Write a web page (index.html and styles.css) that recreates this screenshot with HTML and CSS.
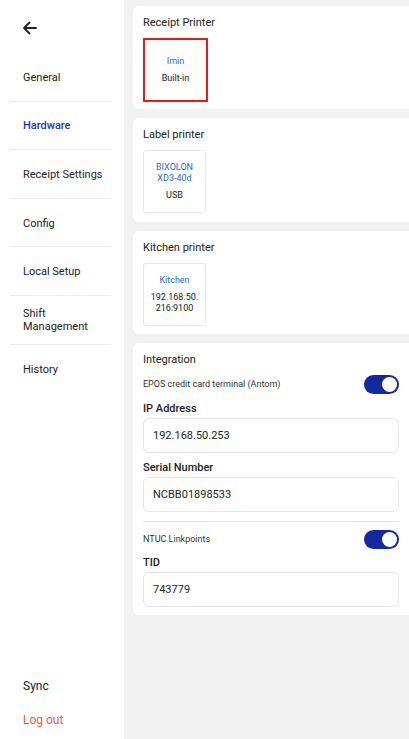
FILE: index.html
```html
<!DOCTYPE html>
<html>
<head>
<meta charset="utf-8">
<link rel="stylesheet" href="styles.css">
</head>
<body>
<div class="app">
  <aside class="sidebar">
    <div class="back">
      <svg width="15" height="14" viewBox="0 0 15 14"><path d="M14 7H2M7.5 1.5L2 7l5.5 5.5" fill="none" stroke="#222" stroke-width="1.8" stroke-linecap="round" stroke-linejoin="round"/></svg>
    </div>
    <nav class="menu">
      <div class="item">General</div>
      <div class="item active">Hardware</div>
      <div class="item">Receipt Settings</div>
      <div class="item">Config</div>
      <div class="item">Local Setup</div>
      <div class="item">Shift<br>Management</div>
      <div class="item last">History</div>
    </nav>
    <div class="bottom">
      <div class="sync">Sync</div>
      <div class="logout">Log out</div>
    </div>
  </aside>
  <main class="main">
    <section class="card first">
      <div class="card-title">Receipt Printer</div>
      <div class="printer selected">
        <div class="pname">Imin</div>
        <div class="pdetail">Built-in</div>
      </div>
    </section>
    <section class="card">
      <div class="card-title">Label printer</div>
      <div class="printer">
        <div class="pname">BIXOLON<br>XD3-40d</div>
        <div class="pdetail">USB</div>
      </div>
    </section>
    <section class="card third">
      <div class="card-title">Kitchen printer</div>
      <div class="printer">
        <div class="pname">Kitchen</div>
        <div class="pdetail">192.168.50.<br>216:9100</div>
      </div>
    </section>
    <section class="card integ">
      <div class="card-title">Integration</div>
      <div class="toggle-row">
        <span class="toggle-label">EPOS credit card terminal (Antom)</span>
        <span class="toggle"><span class="knob"></span></span>
      </div>
      <div class="field-label">IP Address</div>
      <div class="input">192.168.50.253</div>
      <div class="field-label">Serial Number</div>
      <div class="input">NCBB01898533</div>
      <div class="divider"></div>
      <div class="toggle-row second">
        <span class="toggle-label">NTUC Linkpoints</span>
        <span class="toggle"><span class="knob"></span></span>
      </div>
      <div class="field-label tid">TID</div>
      <div class="input">743779</div>
    </section>
  </main>
</div>
</body>
</html>
```
FILE: styles.css
```css
* { box-sizing: border-box; }
html, body { margin: 0; padding: 0; }
body {
  font-family: Roboto, "Liberation Sans", sans-serif;
  color: #222;
  width: 409px;
  height: 739px;
  overflow: hidden;
}
.app {
  display: flex;
  height: 739px;
}
.sidebar {
  width: 124px;
  flex: none;
  background: #fff;
  display: flex;
  flex-direction: column;
}
.back {
  height: 53px;
  padding: 21px 0 0 22px;
}
.back svg { display: block; }
.menu {
  margin-left: 10px;
  width: 101px;
}
.item {
  height: 48.6px;
  border-bottom: 1px solid #ececec;
  display: flex;
  align-items: center;
  padding-left: 13px;
  padding-top: 1px;
  font-size: 11px;
  line-height: 13px;
  color: #222;
}
.item.last { border-bottom: none; }
.item.active {
  color: #2537b3;
  font-weight: 500;
}
.bottom {
  margin-top: auto;
  padding: 0 0 2px 23px;
}
.sync {
  height: 34px;
  line-height: 34px;
  font-size: 12px;
  color: #222;
}
.logout {
  height: 34px;
  line-height: 34px;
  font-size: 12px;
  color: #f2574d;
}
.main {
  flex: 1;
  background: #f2f2f2;
  padding: 6px 0 0 9px;
  display: flex;
  flex-direction: column;
  gap: 9px;
}
.card {
  background: #fff;
  border-radius: 6px 0 0 6px;
  padding: 9px 10px 9px 10px;
}
.card.first { padding-bottom: 7px; }
.card.third { padding-bottom: 8px; }
.card-title {
  font-size: 11px;
  line-height: 16px;
  color: #222;
}
.printer {
  margin-top: 7px;
  width: 63px;
  height: 63px;
  border: 1px solid #e8e8ec;
  border-radius: 3px;
  display: flex;
  flex-direction: column;
  align-items: center;
  justify-content: center;
  text-align: center;
  font-size: 9px;
  line-height: 11px;
}
.printer.selected {
  width: 65px;
  height: 64px;
  border: 2px solid #e8191c;
  border-radius: 0;
}
.pname { color: #2a6bd2; }
.pdetail { color: #222; margin-top: 6px; }
.integ { padding-bottom: 8px; }
.toggle-row {
  margin-top: 6px;
  height: 20px;
  display: flex;
  align-items: center;
  justify-content: space-between;
}
.toggle-row.second { margin-top: 7px; }
.toggle-label {
  font-size: 9px;
  color: #333;
}
.toggle {
  width: 35px;
  height: 19px;
  border-radius: 10px;
  background: #1428a0;
  position: relative;
}
.knob {
  position: absolute;
  right: 2px;
  top: 2px;
  width: 15px;
  height: 15px;
  border-radius: 50%;
  background: #fff;
}
.field-label {
  margin-top: 8px;
  font-size: 11px;
  line-height: 14px;
  font-weight: 500;
  color: #222;
}
.field-label.tid { margin-top: 7px; }
.input {
  margin-top: 2px;
  height: 35px;
  border: 1px solid #e4e6ee;
  border-radius: 6px;
  padding-left: 9px;
  display: flex;
  align-items: center;
  font-size: 11px;
  color: #222;
}
.divider {
  margin-top: 9px;
  height: 1px;
  background: #e6e6e6;
}
```
